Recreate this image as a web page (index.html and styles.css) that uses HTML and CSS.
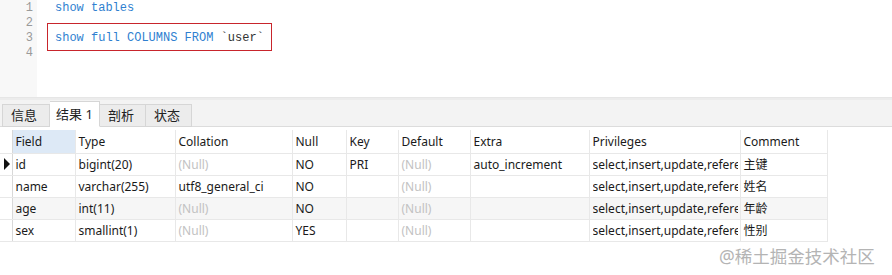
FILE: index.html
```html
<!DOCTYPE html>
<html lang="zh-CN">
<head>
    <meta charset="UTF-8">
    <title>show full columns</title>
    <link rel="stylesheet" href="styles.css">
</head>
<body>
<div class="editor">
    <div class="gutter">
        <div>1</div>
        <div>2</div>
        <div>3</div>
        <div>4</div>
    </div>
    <div class="code">
        <div class="line"><span class="kw">show tables</span></div>
        <div class="line"></div>
        <div class="line"><span class="mark"><span class="kw">show full COLUMNS FROM</span> <span class="id">`user`</span></span></div>
        <div class="line"></div>
    </div>
</div>

<div class="tabs">
    <div class="tab">信息</div>
    <div class="tab active">结果 1</div>
    <div class="tab">剖析</div>
    <div class="tab">状态</div>
</div>

<div class="result">
    <table class="grid">
        <colgroup>
            <col style="width:12px">
            <col style="width:63px">
            <col style="width:100px">
            <col style="width:117px">
            <col style="width:54px">
            <col style="width:52px">
            <col style="width:72px">
            <col style="width:119px">
            <col style="width:151px">
            <col style="width:87px">
        </colgroup>
        <thead>
        <tr>
            <th class="ind"></th>
            <th class="sel">Field</th>
            <th>Type</th>
            <th>Collation</th>
            <th>Null</th>
            <th>Key</th>
            <th>Default</th>
            <th>Extra</th>
            <th>Privileges</th>
            <th>Comment</th>
        </tr>
        </thead>
        <tbody>
        <tr>
            <td class="ind"><span class="arrow"></span></td>
            <td>id</td>
            <td>bigint(20)</td>
            <td class="null">(Null)</td>
            <td>NO</td>
            <td>PRI</td>
            <td class="null">(Null)</td>
            <td>auto_increment</td>
            <td class="clip"><span>select,insert,update,refere</span></td>
            <td>主键</td>
        </tr>
        <tr>
            <td class="ind"></td>
            <td>name</td>
            <td>varchar(255)</td>
            <td>utf8_general_ci</td>
            <td>NO</td>
            <td></td>
            <td class="null">(Null)</td>
            <td></td>
            <td class="clip"><span>select,insert,update,refere</span></td>
            <td>姓名</td>
        </tr>
        <tr class="alt">
            <td class="ind"></td>
            <td>age</td>
            <td>int(11)</td>
            <td class="null">(Null)</td>
            <td>NO</td>
            <td></td>
            <td class="null">(Null)</td>
            <td></td>
            <td class="clip"><span>select,insert,update,refere</span></td>
            <td>年龄</td>
        </tr>
        <tr>
            <td class="ind"></td>
            <td>sex</td>
            <td>smallint(1)</td>
            <td class="null">(Null)</td>
            <td>YES</td>
            <td></td>
            <td class="null">(Null)</td>
            <td></td>
            <td class="clip"><span>select,insert,update,refere</span></td>
            <td>性别</td>
        </tr>
        </tbody>
    </table>
    <div class="watermark">@稀土掘金技术社区</div>
</div>
</body>
</html>
```

FILE: styles.css
```css
* {
    box-sizing: border-box;
    margin: 0;
    padding: 0;
}

body {
    width: 892px;
    height: 275px;
    overflow: hidden;
    background: #ffffff;
    font-family: 'Noto Sans', 'Noto Sans CJK SC', sans-serif;
    font-size: 12px;
    color: #1a1a1a;
}

/* sql editor */
.editor {
    display: flex;
    height: 98px;
    border-bottom: 1px solid #e6e6e6;
}

.gutter {
    width: 37px;
    background: #f8f8f8;
    padding-top: 1px;
    text-align: right;
    padding-right: 4px;
    font-family: 'Liberation Mono', monospace;
    font-size: 12px;
    color: #9a9a9a;
}

.gutter div,
.code .line {
    height: 15px;
    line-height: 15px;
}

.code {
    padding-top: 1px;
    padding-left: 18px;
    font-family: 'Liberation Mono', monospace;
    font-size: 12px;
}

.kw {
    color: #2f7fd0;
}

.id {
    color: #333333;
}

.mark {
    display: inline-block;
    position: relative;
}

.mark::before {
    content: "";
    position: absolute;
    left: -8px;
    top: -8px;
    width: 223px;
    height: 26px;
    border: 1px solid #c8252c;
}

/* tabs */
.tabs {
    display: flex;
    align-items: flex-end;
    height: 29px;
    padding-left: 2px;
    background: #f3f3f3;
    border-top: 2px solid #ececec;
    border-bottom: 1px solid #dcdcdc;
}

.tab {
    height: 23px;
    line-height: 21px;
    padding: 0 8px;
    margin-bottom: -1px;
    background: #ececec;
    border: 1px solid #d6d6d6;
    border-left: none;
    font-size: 13px;
    color: #222;
}

.tab:first-child {
    width: 48px;
    border-left: 1px solid #d6d6d6;
}

.tab.active {
    width: 50px;
    height: 26px;
    line-height: 24px;
    background: #ffffff;
    border-bottom-color: #ffffff;
    padding: 0 6px;
}

.tab:nth-child(3),
.tab:nth-child(4) {
    width: 46px;
}

/* result grid */
.result {
    position: relative;
    padding-top: 3px;
    height: 148px;
}

.grid {
    table-layout: fixed;
    border-collapse: collapse;
    width: 827px;
}

.grid th,
.grid td {
    height: 22px;
    padding: 0 3px;
    text-align: left;
    font-weight: normal;
    white-space: nowrap;
    overflow: hidden;
    border-right: 1px solid #e8e8e8;
    border-bottom: 1px solid #e8e8e8;
}

.grid th {
    height: 23px;
}

.grid .sel {
    background: #dde9f6;
}

.grid .ind {
    padding: 0;
    border-right: 1px solid #d8d8d8;
}

.grid .alt td {
    background: #f6f6f6;
}

.grid .alt .ind {
    background: #ffffff;
}

.null {
    color: #c2c2c2;
}

.clip span {
    display: block;
    width: 145px;
    overflow: hidden;
}

.arrow {
    display: block;
    width: 0;
    height: 0;
    margin-left: 4px;
    border-top: 6px solid transparent;
    border-bottom: 6px solid transparent;
    border-left: 6px solid #111111;
}

.watermark {
    position: absolute;
    left: 719px;
    top: 116px;
    font-size: 17.5px;
    color: #b4b4b4;
}
```
